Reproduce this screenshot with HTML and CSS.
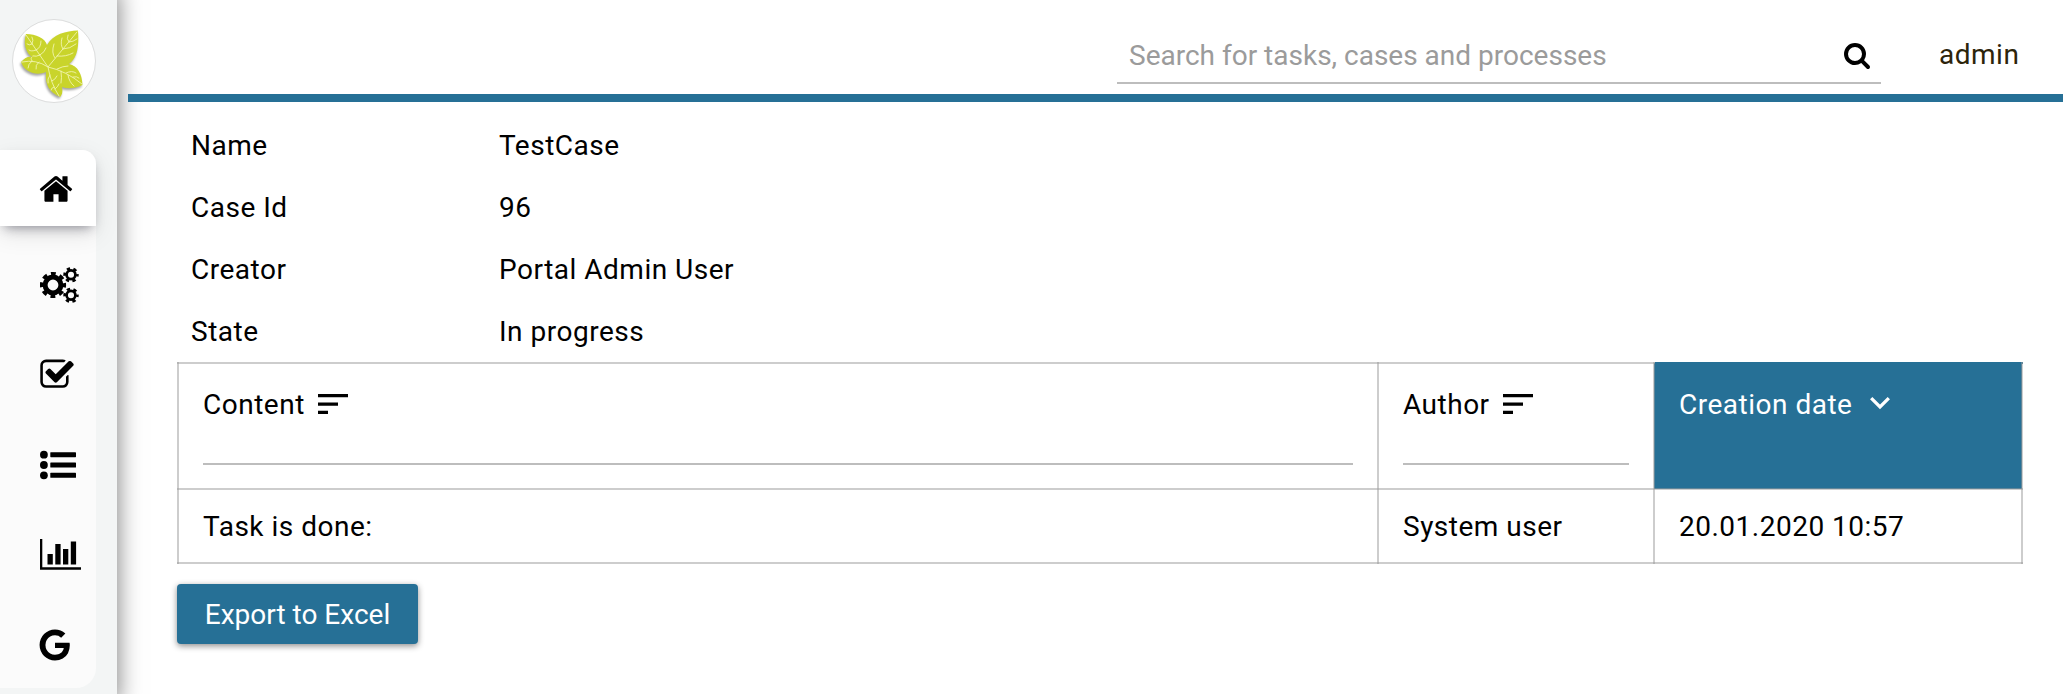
FILE: index.html
```html
<!DOCTYPE html>
<html lang="en">
<head>
<meta charset="utf-8">
<title>Case history</title>
<link rel="stylesheet" href="styles.css">
</head>
<body>
<div class="app">
  <aside class="sidebar">
    <div class="logo">
      <svg class="logo-leaf" viewBox="0 0 84 84">
        <g fill="#c9d42b">
          <path d="M14 15C24 15 33 19 35 26C41 15 54 12 66 11.500C67 27 66 38 57 45C66 47 70 55 70.500 66C62 70 56 70 50 68C51 73 50 76 48 78C37 73 33 66 34 53C25 57 13 54 9 43C13 38 17 37 20 38C14 34 11 25 14 15Z"/>
        </g>
        <g fill="none" stroke="#f1f4ae" stroke-width="0.9" stroke-linecap="round">
          <path d="M14 16L36 48L65 13M10 43Q24 40 36 48Q54 52 70 65M36 48Q39 65 47 77"/>
          <path d="M20 25Q17 27 15 25M24 31Q19 33 17 31M20 25Q22 21 20 18M24 31Q29 29 29 22M28 36Q24 38 21 37M28 36Q33 33 34 29M45 37Q54 38 61 34M51 30Q58 30 64 25M57 23Q61 23 65 20M57 23Q54 20 56 16M51 30Q48 26 50 19M43 39Q39 34 42 25M20 42Q18 39 20 38M27 43Q23 46 24 50M20 42Q16 45 16 49M45 50Q51 47 56 47M54 54Q60 51 64 54M61 58Q65 57 67 59M49 52Q50 59 49 64M56 56Q57 63 62 67M38 56Q35 60 36 64M40 62Q43 61 45 57M42 68Q39 69 39 71M43 70Q46 68 47 65"/>
        </g>
      </svg>
    </div>
    <nav class="menu">
      <a class="item active"><svg class="icon home" viewBox="0 0 1792 1792"><path d="M1472 992v480q0 26-19 45t-45 19h-384v-384h-256v384h-384q-26 0-45-19t-19-45v-480q0-1 .5-3t.5-3l575-474 575 474q1 2 1 6zm223-69l-62 74q-8 9-21 11h-3q-13 0-21-7l-692-577-692 577q-12 8-24 7-13-2-21-11l-62-74q-8-10-7-23.500t11-21.500l719-599q32-26 76-26t76 26l244 204v-195q0-14 9-23t23-9h192q14 0 23 9t9 23v408l219 182q10 8 11 21.500t-7 23.500z"/></svg></a>
      <a class="item"><svg class="icon cogs" viewBox="0 0 40 36">
        <g fill="none" stroke="#000">
          <circle cx="13" cy="18" r="7.900" stroke-width="5"/>
          <circle cx="13" cy="18" r="11.300" stroke-width="3.600" stroke-dasharray="4.800 4.075" stroke-dashoffset="2.400"/>
          <circle cx="31" cy="7.800" r="4.400" stroke-width="2.700"/>
          <circle cx="31" cy="7.800" r="6.200" stroke-width="3" stroke-dasharray="3.200 3.293" stroke-dashoffset="1.600"/>
          <circle cx="31" cy="28.300" r="4.400" stroke-width="2.700"/>
          <circle cx="31" cy="28.300" r="6.200" stroke-width="3" stroke-dasharray="3.200 3.293" stroke-dashoffset="1.600"/>
        </g></svg></a>
      <a class="item"><svg class="icon check" viewBox="0 0 1792 1792"><path d="M1472 930v318q0 119-84.500 203.500t-203.500 84.500h-832q-119 0-203.500-84.500t-84.500-203.500v-832q0-119 84.500-203.500t203.500-84.500h832q63 0 117 25 15 7 18 23 3 17-9 29l-49 49q-10 10-23 10-3 0-9-2-23-6-45-6h-832q-66 0-113 47t-47 113v832q0 66 47 113t113 47h832q66 0 113-47t47-113v-254q0-13 9-22l64-64q10-10 23-10 6 0 12 3 20 8 20 29zm231-489l-814 814q-24 24-57 24t-57-24l-430-430q-24-24-24-57t24-57l110-110q24-24 57-24t57 24l263 263 647-647q24-24 57-24t57 24l110 110q24 24 24 57t-24 57z"/></svg></a>
      <a class="item"><svg class="icon" viewBox="0 0 36 36"><g><circle cx="3.900" cy="7.700" r="3.900"/><circle cx="3.900" cy="18" r="3.900"/><circle cx="3.900" cy="28.300" r="3.900"/><rect x="10.300" y="5.200" width="25.700" height="5" rx=".6"/><rect x="10.300" y="15.500" width="25.700" height="5" rx=".6"/><rect x="10.300" y="25.800" width="25.700" height="5" rx=".6"/></g></svg></a>
      <a class="item"><svg class="icon chart" viewBox="0 0 41 36"><path d="M0 2h2.300v28.300H41v2.500H0zM7.500 17h5.300v10.500H7.500zM15.300 7h5.300v20.500h-5.300zM23 12h5.300v15.500H23zM30.800 4.500h5.300v23h-5.300z"/></svg></a>
      <a class="item"><svg class="icon google" viewBox="0 0 1792 1792"><path d="M896 786h725q12 67 12 128 0 217-91 387.500t-259.500 266.500-386.500 96q-157 0-299-60.500t-245-163.500-163.500-245-60.500-299 60.500-299 163.500-245 245-163.500 299-60.500q300 0 515 201l-209 201q-123-119-306-119-129 0-238.500 65t-173.500 176.500-64 243.500 64 243.500 173.500 176.500 238.500 65q87 0 160-24t120-60 82-82 51.500-87 22.500-78h-436v-264z"/></svg></a>
    </nav>
  </aside>
  <div class="page">
    <header class="topbar">
      <div class="search">
        <input class="search-input" placeholder="Search for tasks, cases and processes">
        <svg class="search-icon" viewBox="0 0 1792 1792"><path d="M1216 832q0-185-131.500-316.500t-316.500-131.500-316.500 131.500-131.500 316.500 131.500 316.500 316.500 131.500 316.500-131.500 131.500-316.500zm512 832q0 52-38 90t-90 38q-54 0-90-38l-343-342q-179 124-399 124-143 0-273.500-55.500t-225-150-150-225-55.500-273.500 55.500-273.500 150-225 225-150 273.500-55.500 273.500 55.500 225 150 150 225 55.500 273.500q0 220-124 399l343 343q37 37 37 90z"/></svg>
      </div>
      <span class="user">admin</span>
    </header>
    <main class="content">
      <dl class="details">
        <dt>Name</dt><dd>TestCase</dd>
        <dt>Case Id</dt><dd>96</dd>
        <dt>Creator</dt><dd>Portal Admin User</dd>
        <dt>State</dt><dd>In progress</dd>
      </dl>
      <table class="history">
        <colgroup><col class="col-content"><col class="col-author"><col class="col-date"></colgroup>
        <thead>
          <tr>
            <th><div class="title">Content<svg class="sort" viewBox="0 0 30 20"><path d="M0 0h30v3.300H0zM0 8.500h20v3.300H0zM0 16.700h10v3.300H0z"/></svg></div><div class="filter"></div></th>
            <th><div class="title">Author<svg class="sort" viewBox="0 0 30 20"><path d="M0 0h30v3.300H0zM0 8.500h20v3.300H0zM0 16.700h10v3.300H0z"/></svg></div><div class="filter"></div></th>
            <th class="sorted"><div class="title">Creation date<svg class="chevron" viewBox="0 0 20 13"><path d="M1.200 1.200L10 10L18.800 1.200" fill="none" stroke="#fff" stroke-width="3.300"/></svg></div></th>
          </tr>
        </thead>
        <tbody>
          <tr><td>Task is done:</td><td>System user</td><td>20.01.2020 10:57</td></tr>
        </tbody>
      </table>
      <button class="export">Export to Excel</button>
    </main>
  </div>
</div>
</body>
</html>
```
FILE: styles.css
```css
* { box-sizing: border-box; }
body {
  margin: 0;
  background: #fff;
  color: #000;
  font: 28px/34px Roboto, sans-serif;
  letter-spacing: .5px;
}
.app { display: flex; height: 694px; overflow: hidden; }
.sidebar {
  width: 117px;
  flex: none;
  background: #f3f5f5;
  box-shadow: -9px 0 22px 10px rgba(0, 0, 0, .5);
  padding-top: 19px;
}
.logo {
  width: 84px;
  height: 84px;
  margin-left: 12px;
  border: 1px solid #dcdddd;
  border-radius: 50%;
  background: #fff;
}
.logo-leaf { display: block; width: 84px; height: 84px; margin: -1px; filter: drop-shadow(-1px 2px 1px rgba(0, 0, 0, .35)); }
.menu {
  width: 96px;
  height: 538px;
  margin-top: 47px;
  background: #fbfbfb;
  border-radius: 0 14px 20px 0;
}
.item { display: flex; align-items: center; height: 90px; padding-left: 40px; }
.item.active {
  height: 76px;
  margin-bottom: 14px;
  background: #fff;
  border-radius: 0 14px 0 0;
  box-shadow: 0 8px 24px rgba(0, 0, 0, .1), 0 6px 12px -5px rgba(40, 40, 60, .5);
}
.icon { display: block; width: 36px; height: 36px; flex: none; }
.home { margin: 2px 0 0 -2px; }
.check { margin-left: -1px; }
.cogs { width: 40px; }
.chart { width: 41px; }
.google { margin-left: -3px; }
.page { flex: 1; margin-left: 11px; }
.topbar {
  display: flex;
  justify-content: flex-end;
  height: 102px;
  padding: 28px 45px 0 0;
  border-bottom: 8px solid #267096;
}
.search {
  display: flex;
  align-items: center;
  width: 764px;
  height: 56px;
  padding: 0 10px 0 12px;
  border-bottom: 2px solid #bdbdbd;
}
.search-input {
  flex: 1;
  padding: 2px 0 0;
  border: 0;
  outline: 0;
  background: none;
  font: inherit;
  letter-spacing: 0;
}
.search-input::placeholder { color: #9b9b9b; opacity: 1; }
.search-icon { width: 28px; height: 28px; }
.user { width: 79px; margin-left: 58px; padding-top: 10px; color: #2d240a; }
.content { padding: 12px 40px 0 49px; }
.details {
  display: grid;
  grid-template-columns: 308px 1fr;
  grid-auto-rows: 62px;
  align-items: center;
  margin: 0;
  padding-left: 14px;
}
.details dt, .details dd { margin: 0; padding-top: 2px; }
.history {
  width: 1846px;
  table-layout: fixed;
  border-collapse: collapse;
}
.col-content { width: 1200px; }
.col-author { width: 276px; }
.col-date { width: 368px; }
.history th, .history td {
  padding: 0 24px;
  border: 2px solid rgba(155, 155, 155, .5);
  font-weight: 400;
  text-align: left;
}
.history th { height: 126px; vertical-align: top; }
.history td { height: 74px; padding-top: 2px; }
.title { display: flex; align-items: center; height: 34px; margin-top: 24px; }
.sort { width: 30px; height: 20px; margin: 0 0 2px 13px; }
.chevron { width: 20px; height: 13px; margin: 0 0 4px 18px; }
.filter { height: 43px; border-bottom: 2px solid #bdbdbd; }
.history .sorted { background: #267096; color: #fff; border-top-color: #267096; }
.export {
  display: block;
  width: 241px;
  height: 60px;
  margin-top: 20px;
  padding: 2px 0 0;
  border: 0;
  border-radius: 4px;
  background: #267096;
  box-shadow: 0 2px 6px rgba(0, 0, 0, .45);
  color: #fff;
  font: inherit;
  letter-spacing: 0;
}
```
